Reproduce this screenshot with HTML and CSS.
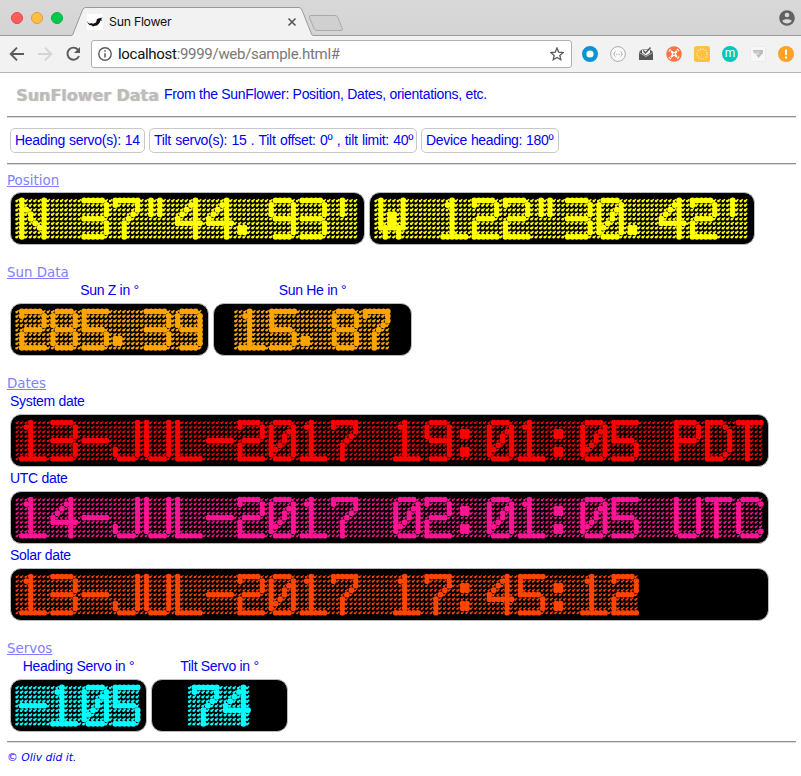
FILE: index.html
```html
<!DOCTYPE html>
<html lang="en">
<head>
<meta charset="utf-8">
<title>Sun Flower</title>
<link rel="stylesheet" href="styles.css">
</head>
<body>
<div class="tabstrip">
  <div class="lights"><i class="red"></i><i class="amber"></i><i class="green"></i></div>
  <div class="tab">
    <svg class="tab-shape" width="276" height="36" viewBox="0 0 276 36"><path d="M0 36V35.5H1.500Q2.500 35.500 3 34L12.500 10Q13.500 7.500 15.500 7.500H229Q231 7.500 232 10L241.500 34Q242 35.500 244 35.500V36Z" fill="#f2f2f2"/><path d="M0 35.500H1.500Q2.500 35.500 3 34L12.500 10Q13.500 7.500 15.500 7.500H229Q231 7.500 232 10L241.500 34Q242 35.500 244 35.500H276" fill="none" stroke="#999"/><path d="M240.500 15.500H265Q267 15.500 268 17.500L272 28Q273 30.500 271 30.500H247Q245 30.500 244 28.500L239.500 17.500Q239 15.500 240.500 15.500Z" fill="#d0d0d0" stroke="#aaa"/></svg>
    <div class="tab-content">
      <svg width="16" height="16" viewBox="0 0 16 16"><path fill="#fff" d="M0 0h16v16H0z"/><path d="M0 7L1.500 9 3 9.800 4 9 6 9.800 9 8.500 10 5 12 4.200 16 3.500 14 5 15.500 6.500 13.500 6.500 12.500 9 10 11.500 7 12 6 12.800 5 11.500 2.500 11 1 9.500Z" fill="#111"/></svg>
      <span class="tab-title">Sun Flower</span>
      <svg width="10" height="10" viewBox="0 0 10 10"><path d="M1.500 1.500l7 7m0-7l-7 7" stroke="#555" stroke-width="1.600"/></svg>
    </div>
  </div>
  <svg class="user" width="16" height="16" viewBox="0 0 16 16"><circle cx="8" cy="8" r="7.800" fill="#616161"/><circle cx="8" cy="5" r="2.300" fill="#d8d8d8"/><path d="M3.300 11C3.600 8.800 12.400 8.800 12.700 11C11.200 14.200 4.800 14.200 3.300 11Z" fill="#d8d8d8"/></svg>
</div>
<div class="toolbar">
  <svg class="nav" width="76" height="18" viewBox="0 0 76 18" fill="none" stroke="#5a5a5a" stroke-width="1.900"><path d="M16 9H3M9 2.700L2.700 9 9 15.300"/><path stroke="#d5d5d5" d="M30 9H43M37 2.700L43.300 9 37 15.300"/><path d="M69.800 4.500A6 6 0 1 0 71 11"/><path d="M72 2v6h-6z" fill="#5a5a5a" stroke="none"/></svg>
  <div class="address">
    <svg width="14" height="14" viewBox="0 0 14 14"><circle cx="7" cy="7" r="6.200" fill="none" stroke="#5a5a5a" stroke-width="1.400"/><path d="M7 6.200v4.300M7 3.300v1.500" stroke="#5a5a5a" stroke-width="1.500"/></svg>
    <span class="url"><b>localhost</b>:9999/web/sample.html#</span>
    <svg width="14" height="14" viewBox="0 0 14 14"><path d="M7 1l1.700 4.100 4.500.4-3.400 2.900 1 4.300L7 10.400l-3.800 2.300 1-4.300L.8 5.500l4.500-.4z" fill="none" stroke="#5a5a5a" stroke-width="1.300"/></svg>
  </div>
  <div class="extensions">
    <svg viewBox="0 0 16 16"><circle cx="8" cy="8" r="5.800" fill="#fff" stroke="#0b93d2" stroke-width="4.400"/></svg>
    <svg viewBox="0 0 16 16"><circle cx="8" cy="8" r="7.400" fill="#fafafa" stroke="#aaa"/><path d="M5.500 5.500q-1 0-1 1.300t-1 1.200q1 0 1 1.200t1 1.300M10.500 5.500q1 0 1 1.300t1 1.200q-1 0-1 1.200t-1 1.300M6.200 8.300h.9m.5 0h.9m.5 0h.9" fill="none" stroke="#aaa" stroke-width=".9"/></svg>
    <svg viewBox="0 0 16 16"><path d="M1 6L4.500 3h7L15 6V14H1z" fill="#555"/><path d="M4 3.500h8v3.500L8 9.500 4 7z" fill="#f2f2f2"/><path d="M1 6.500l7 4L15 6.500" stroke="#eee" fill="none" stroke-width=".6"/><path d="M5.300 4.500l2.200 2.500L12.500 1.500" fill="none" stroke="#555" stroke-width="1.400"/></svg>
    <svg viewBox="0 0 16 16"><circle cx="8" cy="8" r="7.800" fill="#fc7440"/><path d="M5 5l6 6M11 5l-6 6" stroke="#fff" stroke-width="2"/><circle cx="8" cy="8" r="2.300" fill="#fff"/><circle cx="8" cy="8" r="1" fill="#fc7440"/><path d="M2.800 5.500l1.800-2.300M10.800 2.900l2.400 1.900M13.200 10.500l-1.800 2.300M5.200 13.100l-2.400-1.900" stroke="#fff" stroke-width="1.100"/></svg>
    <svg viewBox="0 0 16 16"><rect width="16" height="16" rx="2.500" fill="#ffc043"/><circle cx="8" cy="8" r="5" fill="none" stroke="#fff0c5" stroke-width="1.200" stroke-dasharray="1.200 1.400"/></svg>
    <span class="round-m">m</span>
    <svg viewBox="0 0 16 16"><rect x=".5" y=".5" width="15" height="15" rx="1.500" fill="#f7f7f7" stroke="#ececec"/><path d="M3 4h10v3L8.500 12 6 8.500h3V7.500H4z" fill="#bbb"/><path d="M4.500 6h6" stroke="#e6e6e6" stroke-width=".7"/></svg>
    <svg viewBox="0 0 16 16"><circle cx="8" cy="8" r="8" fill="#ffa028"/><path d="M8 3.500v5.500M8 10.500v2" stroke="#fff" stroke-width="2"/></svg>
  </div>
</div>
<main>
  <header><h1>SunFlower Data</h1><span class="intro">From the SunFlower: Position, Dates, orientations, etc.</span></header>
  <div class="rule"></div>
  <div class="facts">
    <span class="fact f1">Heading servo(s): 14</span>
    <span class="fact f2">Tilt servo(s): 15 . Tilt offset: 0º , tilt limit: 40º</span>
    <span class="fact f3">Device heading: 180º</span>
  </div>
  <div class="rule"></div>
  <section class="position">
    <h2>Position</h2>
    <div class="row">
      <canvas class="led" width="353" height="51" data-value="N 37&quot;44.93'" data-color="#ffff00"></canvas>
      <canvas class="led" width="384" height="51" data-value="W 122&quot;30.42'" data-color="#ffff00"></canvas>
    </div>
  </section>
  <section class="sun">
    <h2>Sun Data</h2>
    <div class="row">
      <div class="gauge"><label>Sun Z in °</label><canvas class="led" width="197" height="51" data-value="285.39" data-color="#ffa500"></canvas></div>
      <div class="gauge"><label>Sun He in °</label><canvas class="led" width="197" height="51" data-value="15.87" data-color="#ffa500" data-center></canvas></div>
    </div>
  </section>
  <section class="dates">
    <h2>Dates</h2>
    <div class="date"><label>System date</label><canvas class="led" width="757" height="51" data-value="13-JUL-2017 19:01:05 PDT" data-color="#ff0000" data-dim></canvas></div>
    <div class="date"><label>UTC date</label><canvas class="led" width="757" height="51" data-value="14-JUL-2017 02:01:05 UTC" data-color="#ff1493" data-dim></canvas></div>
    <div class="date"><label>Solar date</label><canvas class="led" width="757" height="51" data-value="13-JUL-2017 17:45:12" data-color="#ff4500" data-dim></canvas></div>
  </section>
  <section class="servos">
    <h2>Servos</h2>
    <div class="row">
      <div class="gauge"><label>Heading Servo in °</label><canvas class="led" width="135" height="51" data-value="-105" data-color="#00ffff"></canvas></div>
      <div class="gauge"><label>Tilt Servo in °</label><canvas class="led" width="135" height="51" data-value="74" data-color="#00ffff" data-center></canvas></div>
    </div>
  </section>
  <div class="rule"></div>
  <footer>© <i>Oliv did it.</i></footer>
</main>
<script src="led.js"></script>
</body>
</html>
```
FILE: styles.css
```css
* { box-sizing: border-box; }
body { margin: 0; background: #fff; color: #0000f0; font: 14px "Liberation Sans", sans-serif; letter-spacing: -.3px; height: 776px; overflow: hidden; }
svg { display: block; flex: none; }

.tabstrip { display: flex; height: 36px; background: linear-gradient(#d8d8d8, #d4d4d4); border-bottom: 1px solid #999; }
.lights { display: flex; gap: 8px; padding: 12px 0 0 11px; width: 70px; flex: none; }
.lights i { width: 12px; height: 12px; border-radius: 50%; border: 1px solid; }
.red { background: #ff5b5c; border-color: #e2494b !important; }
.amber { background: #ffbd44; border-color: #dfa035 !important; }
.green { background: #00ca4e; border-color: #0bae40 !important; }
.tab { display: grid; width: 276px; height: 36px; flex: none; }
.tab-shape, .tab-content { grid-area: 1 / 1; }
.tab-content { display: flex; align-items: center; gap: 6px; width: 227px; height: 28px; margin: 8px 0 0 17px; padding-right: 17px; color: #111; font: 12.3px Inter, sans-serif; }
.tab-title { flex: 1; margin-top: -1px; letter-spacing: -.25px; }
.user { margin: 10px 6px 0 auto; }

.toolbar { display: flex; height: 37px; background: #f2f2f2; border-bottom: 1px solid #b4b4b4; }
.nav { margin: 9px 0 0 8px; }
.address { display: flex; align-items: center; gap: 6px; width: 481px; height: 28px; margin: 4px 0 0 7px; padding: 0 7px 0 6px; background: #fff; border: 1px solid #b0b0b0; border-radius: 3px; }
.url { flex: 1; color: #777; font: 15px Roboto, sans-serif; letter-spacing: -.3px; }
.url b { color: #111; font-weight: 400; }
.extensions { display: flex; gap: 12px; padding: 10px 0 0 10px; }
.extensions svg { width: 16px; height: 16px; }
.round-m { width: 16px; height: 16px; border-radius: 50%; background: #00c9b7; color: #fff; font: 12px/15px Roboto, sans-serif; letter-spacing: 0; text-align: center; }

main { padding: 0 5px 0 7px; }
header { display: flex; align-items: center; height: 43px; padding-left: 9px; }
h1 { width: 148px; margin: 2px 0 0; color: #bcbcbc; font: bold 16px "DejaVu Sans", sans-serif; letter-spacing: -.05px; text-shadow: 1px 0 1px #ccc; white-space: nowrap; }
.intro { margin-top: -1px; }
.rule { height: 2px; border-top: 1px solid #8f8f8f; border-bottom: 1px solid #ddd; }
.facts { display: flex; gap: 4px; height: 45px; padding: 10px 3px; white-space: nowrap; }
.fact { height: 25px; padding: 0 4px; line-height: 23px; border: 1px solid #c8c8c8; border-radius: 5px; }
.f1 { width: 135px; word-spacing: .4px; }
.f2 { width: 268px; word-spacing: .8px; }
.f3 { width: 138px; word-spacing: .3px; }
h2 { height: 17px; margin: 0; color: #8080ff; font: 13.4px/17px "DejaVu Sans", sans-serif; letter-spacing: 0; text-decoration: underline; }
section { padding-top: 7px; }
.row { display: flex; gap: 4px; padding-left: 3px; }
.led { display: block; box-sizing: content-box; border: 1px solid #bbb; border-radius: 11px; background: #000; }
.position { height: 92px; }
.position .row { padding-top: 3px; }
.sun { height: 111px; }
.dates { height: 265px; }
.servos { height: 108px; }
.gauge label, .date label { display: block; height: 22px; line-height: 18px; }
.gauge label { text-align: center; }
.date { height: 77px; padding-left: 3px; }
footer { padding-top: 7px; font: italic 10.8px/15px "DejaVu Sans", sans-serif; letter-spacing: 0; }
```
FILE: led.js
```js
// 6x9 dot-matrix font; each character occupies seven columns.
const FONT = {
  "0": ".1111. 1....1 1...11 1..1.1 1..1.1 1.1..1 11...1 1....1 .1111.",
  "1": "..1... .11... ..1... ..1... ..1... ..1... ..1... ..1... 111111",
  "2": "11111. 1....1 .....1 .....1 .1111. 1..... 1..... 1..... 111111",
  "3": "11111. .....1 .....1 .....1 11111. .....1 .....1 .....1 11111.",
  "4": "....1. ...11. ..1.1. .1..1. 1...1. 111111 ....1. ....1. ....1.",
  "5": "111111 1..... 1..... 1..... 11111. .....1 .....1 .....1 11111.",
  "7": "111111 1....1 .....1 ....1. ...1.. ..1... ..1... ..1... ..1...",
  "8": ".1111. 1....1 1....1 1....1 .1111. 1....1 1....1 1....1 .1111.",
  "9": ".1111. 1....1 1....1 1....1 .11111 .....1 .....1 .....1 .1111.",
  "-": "...... ...... ...... ...... 111111 ...... ...... ...... ......",
  ".": "...... ...... ...... ...... ...... ...... 11.... 11.... ......",
  ":": "...... ...... .11... .11... ...... ...... .11... .11... ......",
  "'": "..1... ..1... ..1... ..1... ...... ...... ...... ...... ......",
  '"': ".1.1.. .1.1.. .1.1.. .1.1.. ...... ...... ...... ...... ......",
  "N": "1....1 1....1 11...1 1.1..1 1.1..1 1..1.1 1...11 1....1 1....1",
  "W": "1....1 1....1 1....1 1.11.1 1.11.1 1.11.1 111111 .1..1. .1..1.",
  "J": ".....1 .....1 .....1 .....1 .....1 .....1 1....1 1....1 .1111.",
  "U": "1....1 1....1 1....1 1....1 1....1 1....1 1....1 1....1 .1111.",
  "L": "1..... 1..... 1..... 1..... 1..... 1..... 1..... 1..... 111111",
  "P": "11111. 1....1 1....1 1....1 11111. 1..... 1..... 1..... 1.....",
  "D": "1111.. 1...1. 1....1 1....1 1....1 1....1 1....1 1...1. 1111..",
  "T": "111111 ..1... ..1... ..1... ..1... ..1... ..1... ..1... ..1...",
  "C": ".1111. 1....1 1..... 1..... 1..... 1..... 1..... 1....1 .1111."
};
const PITCH = 4.452, ROW_PITCH = 4.52;

document.querySelectorAll(".led").forEach(canvas => {
  const ctx = canvas.getContext("2d");
  const text = canvas.dataset.value;
  const dim = "dim" in canvas.dataset;
  const left = "center" in canvas.dataset ? (canvas.width - text.length * 7 * PITCH) / 2 - .5 : 4.2;
  canvas.setAttribute("role", "img");
  canvas.setAttribute("aria-label", text);
  ctx.fillStyle = ctx.strokeStyle = canvas.dataset.color;
  [...text].forEach((ch, n) => {
    const rows = FONT[ch] ? FONT[ch].split(" ") : [];
    for (let r = 0; r < 9; r++) for (let c = 0; c < 7; c++) {
      const x = left + 2.2 + (n * 7 + c) * PITCH;
      const y = 7.6 + r * ROW_PITCH;
      ctx.beginPath();
      if (c > 0 && rows[r] && rows[r][c - 1] === "1") {
        ctx.arc(x, y, dim ? 2.85 : 3, 0, 7);
        ctx.fill();
      } else {
        // Unlit bulb: a short highlight with a heavier lower-left end.
        ctx.lineWidth = dim ? 1.1 : 1.4;
        ctx.moveTo(x - 1, y + 1);
        ctx.lineTo(x + 1.3, y - 1.3);
        ctx.stroke();
        ctx.beginPath();
        ctx.arc(x - .8, y + .5, dim ? 1.1 : 1.3, 0, 7);
        ctx.fill();
      }
    }
  });
});
```
